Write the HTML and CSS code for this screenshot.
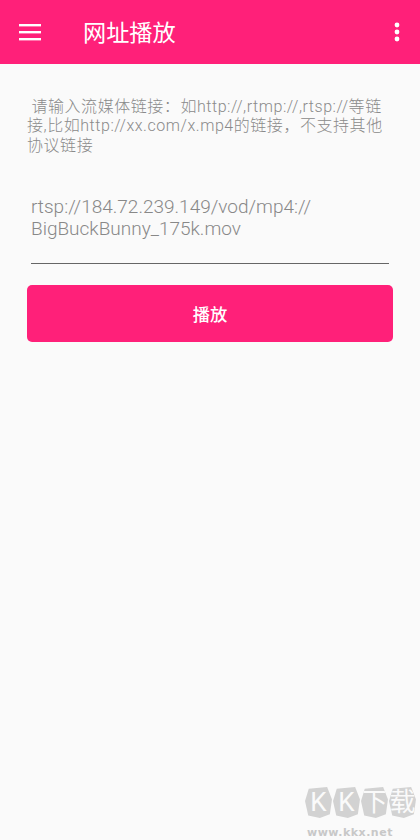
FILE: index.html
```html
<!DOCTYPE html>
<html lang="zh-CN">
<head>
    <meta charset="UTF-8">
    <meta name="viewport" content="width=device-width, initial-scale=1.0">
    <title>网址播放</title>
    <link rel="stylesheet" href="styles.css">
</head>
<body>

    <!-- Toolbar -->
    <div class="toolbar">
        <svg class="menu-icon" width="24" height="18" viewBox="0 0 24 18">
            <rect x="1" y="1" width="22" height="2.4" fill="#fff"/>
            <rect x="1" y="8" width="22" height="2.4" fill="#fff"/>
            <rect x="1" y="15" width="22" height="2.4" fill="#fff"/>
        </svg>
        <div class="toolbar-title">网址播放</div>
        <svg class="more-icon" width="8" height="20" viewBox="0 0 8 20">
            <circle cx="4" cy="3" r="2.4" fill="#fff"/>
            <circle cx="4" cy="10" r="2.4" fill="#fff"/>
            <circle cx="4" cy="17" r="2.4" fill="#fff"/>
        </svg>
    </div>

    <!-- Main content -->
    <div class="content">
        <p class="hint">&nbsp;请输入流媒体链接：如http://,rtmp://,rtsp://等链接,比如http://xx.com/x.mp4的链接，不支持其他协议链接</p>
        <div class="url-field">rtsp://184.72.239.149/vod/mp4://<br>BigBuckBunny_175k.mov</div>
        <button class="play-btn">播放</button>
    </div>

    <!-- Site watermark -->
    <div class="watermark">
        <div class="wm-logo">
            <span class="wm-char">K</span>
            <span class="wm-char">K</span>
            <span class="wm-char">下</span>
            <span class="wm-char">载</span>
        </div>
        <div class="wm-url">www.kkx.net</div>
    </div>

</body>
</html>
```

FILE: styles.css
```css
body {
    font-family: "Roboto", "Noto Sans CJK SC", sans-serif;
    background-color: #fafafa;
    margin: 0;
    height: 840px;
    overflow: hidden;
    position: relative;
}

/* Toolbar */
.toolbar {
    height: 64px;
    background-color: #ff2079;
    display: flex;
    align-items: center;
    padding: 0 19px 0 18px;
}

.menu-icon {
    flex: none;
}

.toolbar-title {
    flex: 1;
    margin-left: 41px;
    margin-bottom: 2px;
    color: #fff;
    font-size: 23.2px;
}

.more-icon {
    flex: none;
}

/* Content */
.content {
    padding: 33px 27px 0;
}

.hint {
    margin: 0;
    color: #8a8a8a;
    font-size: 16px;
    font-weight: 300;
    letter-spacing: 0.55px;
    line-height: 19.3px;
}

.url-field {
    margin: 41px 4px 0;
    padding-bottom: 23px;
    border-bottom: 1px solid #666;
    color: #888;
    font-size: 19px;
    font-weight: 300;
    line-height: 22px;
}

.play-btn {
    display: block;
    width: 100%;
    height: 57px;
    margin-top: 21px;
    border: 0;
    border-radius: 5px;
    background-color: #ff2079;
    color: #fff;
    font-family: inherit;
    font-size: 17.3px;
    font-weight: 500;
}

/* Watermark */
.watermark {
    position: absolute;
    left: 305px;
    top: 787px;
    width: 115px;
}

.wm-logo {
    display: flex;
    gap: 1px;
}

.wm-char {
    width: 27px;
    height: 31px;
    background-color: #d2d2d2;
    clip-path: polygon(14% 6%, 82% 0, 100% 40%, 92% 88%, 55% 100%, 12% 92%, 0 45%);
    color: #fafafa;
    font-size: 26px;
    line-height: 31px;
    text-align: center;
}

.wm-url {
    margin-top: 8px;
    margin-left: 2px;
    color: #c8c8c8;
    font-family: "DejaVu Sans", sans-serif;
    font-size: 11px;
    font-weight: bold;
    letter-spacing: 0.5px;
}
```
